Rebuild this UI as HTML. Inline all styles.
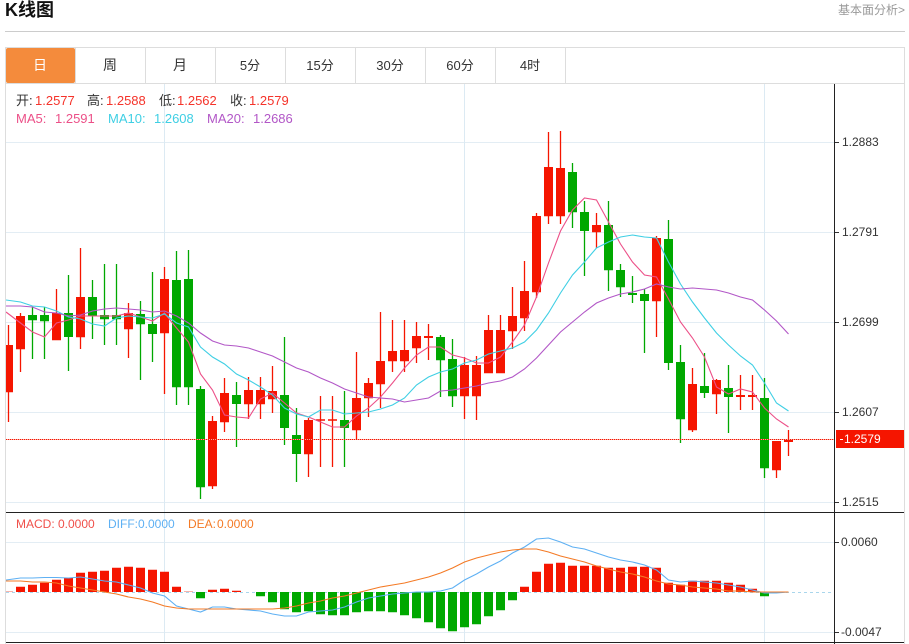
<!DOCTYPE html>
<html>
<head>
<meta charset="utf-8">
<style>
html,body{margin:0;padding:0;background:#fff;width:909px;height:644px;overflow:hidden}
svg{position:absolute;left:0;top:0;display:block}
text{font-family:"Liberation Sans","Noto Sans CJK SC",sans-serif}
</style>
</head>
<body>
<svg width="909" height="644" viewBox="0 0 909 644" xmlns="http://www.w3.org/2000/svg">
<defs><clipPath id="c"><rect x="6" y="84" width="828" height="558"/></clipPath></defs>
<!-- header -->
<text x="5" y="16" font-size="18" font-weight="700" fill="#111">K线图</text>
<text x="905" y="14" font-size="12" fill="#999" text-anchor="end">基本面分析&gt;</text>
<rect x="5" y="31" width="900" height="1" fill="#ccc"/>
<!-- frame -->
<rect x="5.5" y="47.5" width="899" height="597" fill="none" stroke="#ddd"/>
<rect x="6" y="83" width="898" height="1" fill="#ddd"/>
<path d="M75.5 48V83M145.5 48V83M215.5 48V83M285.5 48V83M355.5 48V83M425.5 48V83M495.5 48V83M565.5 48V83" stroke="#ddd" fill="none"/>
<rect x="6" y="48" width="69" height="35" rx="2" fill="#f48b3c"/>
<g font-size="13" text-anchor="middle" fill="#333">
<text x="40" y="70" fill="#fff" font-size="14">日</text>
<text x="110" y="70" font-size="14">周</text>
<text x="180" y="70" font-size="14">月</text>
<text x="250" y="70">5分</text>
<text x="320" y="70">15分</text>
<text x="390" y="70">30分</text>
<text x="460" y="70">60分</text>
<text x="530" y="70">4时</text>
</g>
<!-- grid -->
<path d="M6 142.5H834M6 232.5H834M6 322.5H834M6 412.5H834M6 502.5H834M6 542.5H834M6 632.5H834" stroke="#e3edf4" fill="none"/>
<path d="M164.5 84V642M464.5 84V642M764.5 84V642" stroke="#dceaf3" fill="none"/>
<g clip-path="url(#c)">
<!-- red wicks -->
<path fill="none" stroke="#f51500" stroke-width="1.3" d="M8.5 325V422M20.5 313V372M56.5 289V340M80.5 248V349M128.5 303V358M164.5 267V394M212.5 416V489M224.5 378V432M248.5 377V419M260.5 377V419M272.5 366V413M308.5 418V477M320.5 396V467M332.5 396V467M356.5 352V439M368.5 378V417M380.5 312V408M392.5 320V372M404.5 320V372M416.5 322V363M428.5 324V360M464.5 357V419M476.5 356V420M488.5 315V373M500.5 315V373M512.5 287V349M524.5 261V331M536.5 213V298M548.5 132V224M560.5 131V224M596.5 213V248M656.5 236V337M692.5 368V432M716.5 379V414M740.5 375V410M752.5 375V410M776.5 441V478M788.5 430V456"/>
<!-- green wicks -->
<path fill="none" stroke="#00a800" stroke-width="1.3" d="M32.5 307V359M44.5 307V359M68.5 275V371M92.5 280V339M104.5 264V345M116.5 264V345M140.5 301V380M152.5 272V362M176.5 251V405M188.5 250V405M200.5 386V499M236.5 382V447M284.5 337V445M296.5 408V482M344.5 391V467M440.5 335V397M452.5 339V407M572.5 163V228M584.5 201V276M608.5 201V291M620.5 264V297M632.5 276V303M644.5 289V353M668.5 220V370M680.5 345V443M704.5 353V398M728.5 365V433M764.5 378V478"/>
<!-- red bodies -->
<path fill="none" stroke="#f51500" stroke-width="9" d="M8.5 345V392.3M20.5 316V349.3M56.5 313V340.3M80.5 297V337.3M128.5 313V329.3M164.5 279V333.3M212.5 421V486.3M224.5 393V422.3M248.5 390V404.3M260.5 390V404.3M272.5 391V399.3M308.5 420V454.3M320.5 419.3V420.7M332.5 419.3V420.7M356.5 398V430.3M368.5 383V398.3M380.5 361V384.3M392.5 351V361.3M404.5 350V361.3M416.5 336V348.3M428.5 336V338M464.5 365V396.3M476.5 365V396.3M488.5 330V373.3M500.5 330V373.3M512.5 316V331.3M524.5 291V318.3M536.5 216V292.3M548.5 167V216.3M560.5 168V216.3M596.5 225V232.3M656.5 238V301.3M692.5 384V430.3M716.5 380V394.3M740.5 395V397M752.5 395V397M776.5 441V470.3M788.5 439V442"/>
<!-- green bodies -->
<path fill="none" stroke="#00a800" stroke-width="9" d="M32.5 315V320.3M44.5 315V321.3M68.5 313V337M92.5 297V316.3M104.5 315V319.3M116.5 315V319.3M140.5 314V324.3M152.5 324V334M176.5 280V387.3M188.5 279V387.3M200.5 389V487.3M236.5 395V404M284.5 395V428M296.5 435V454M344.5 420V428M440.5 337V360.3M452.5 359V396.3M572.5 172V212.3M584.5 212V231M608.5 225V270.3M620.5 270V287.3M632.5 293V295M644.5 294V301M668.5 239V363M680.5 362V419.3M704.5 386V393M728.5 388V397M764.5 398V468.3"/>
<!-- MA5 -->
<polyline fill="none" stroke="#ec5088" stroke-width="1.1" points="6,312 20.5,323 32.5,332 44.5,337 56.5,323 68.5,320 80.5,316 92.5,316 104.5,316 116.5,316 128.5,313 140.5,317 152.5,321 164.5,313 176.5,328 188.5,342 200.5,374 212.5,390 224.5,415 236.5,417 248.5,418 260.5,399 272.5,393 284.5,403 296.5,413 308.5,417 320.5,422 332.5,427 344.5,427 356.5,416 368.5,408 380.5,397 392.5,383 404.5,368 416.5,355 428.5,347 440.5,347 452.5,355 464.5,358 476.5,363 488.5,363 500.5,357 512.5,342 524.5,325 536.5,297 548.5,263 560.5,231 572.5,210 584.5,198 596.5,200 608.5,222 620.5,244 632.5,262 644.5,275 656.5,277 668.5,299 680.5,322 692.5,338 704.5,357 716.5,387 728.5,394 740.5,389 752.5,392 764.5,408 776.5,419 788.5,427"/>
<!-- MA10 -->
<polyline fill="none" stroke="#3fcfe4" stroke-width="1.1" points="6,300 20.5,302 32.5,306 44.5,307 56.5,311 68.5,317 80.5,319 92.5,324 104.5,326 116.5,318 128.5,316 140.5,317 152.5,318 164.5,314 176.5,323 188.5,327 200.5,347 212.5,357 224.5,364 236.5,374 248.5,380 260.5,387 272.5,395 284.5,408 296.5,414 308.5,417 320.5,410 332.5,410 344.5,414 356.5,413 368.5,412 380.5,409 392.5,405 404.5,398 416.5,385 428.5,377 440.5,372 452.5,369 464.5,363 476.5,360 488.5,354 500.5,351 512.5,348 524.5,342 536.5,330 548.5,313 560.5,293 572.5,275 584.5,262 596.5,248 608.5,242 620.5,237 632.5,235 644.5,237 656.5,238 668.5,262 680.5,284 692.5,302 704.5,318 716.5,333 728.5,345 740.5,356 752.5,365 764.5,383 776.5,403 788.5,411"/>
<!-- MA20 -->
<polyline fill="none" stroke="#b257c7" stroke-width="1.1" points="6,306 20.5,306 32.5,307 44.5,312 56.5,313 68.5,316 80.5,315 92.5,311 104.5,309 116.5,308 128.5,309 140.5,310 152.5,312 164.5,311 176.5,316 188.5,323 200.5,333 212.5,341 224.5,345 236.5,346 248.5,348 260.5,352 272.5,356 284.5,362 296.5,368 308.5,372 320.5,378 332.5,383 344.5,389 356.5,393 368.5,397 380.5,398 392.5,399 404.5,402 416.5,400 428.5,398 440.5,391 452.5,390 464.5,388 476.5,386 488.5,383 500.5,381 512.5,377 524.5,369 536.5,358 548.5,345 560.5,332 572.5,322 584.5,312 596.5,303 608.5,298 620.5,294 632.5,292 644.5,289 656.5,284 668.5,287 680.5,289 692.5,288 704.5,289 716.5,290 728.5,293 740.5,297 752.5,300 764.5,310 776.5,321 788.5,334"/>
<!-- last price dotted -->
<rect x="6" y="439" width="828" height="1" fill="#f9a8a0"/>
<path d="M6 439.5H834" stroke="#f51500" stroke-dasharray="1 1" fill="none"/>
<!-- MACD zero -->
<path d="M6 592.5H834" stroke="#a9d6ec" stroke-dasharray="3 3" fill="none"/>
<!-- MACD red bars -->
<path fill="none" stroke="#f51500" stroke-width="9" d="M20.5 586.7V592M32.5 584.7V592M44.5 582.7V592M56.5 579.7V592M68.5 577.7V592M80.5 572.7V592M92.5 571.7V592M104.5 570.7V592M116.5 567.7V592M128.5 566.7V592M140.5 567.7V592M152.5 569.7V592M164.5 571.7V592M176.5 586.7V592M212.5 589.7V592M224.5 588.7V592M236.5 590.7V592M524.5 586.7V592M536.5 571.7V592M548.5 563.7V592M560.5 562.7V592M572.5 565.7V592M584.5 565.7V592M596.5 565.7V592M608.5 567.7V592M620.5 567.7V592M632.5 566.7V592M644.5 566.7V592M656.5 567.7V592M668.5 582.7V592M680.5 584.7V592M692.5 580.7V592M704.5 580.7V592M716.5 580.7V592M728.5 582.7V592M740.5 584.7V592M752.5 588.7V592"/>
<path fill="none" stroke="#f7b3ab" stroke-width="9" d="M8.5 591V592M188.5 591V592"/>
<!-- MACD green bars -->
<path fill="none" stroke="#00a800" stroke-width="9" d="M200.5 592V598.3M260.5 592V596.3M272.5 592V602.3M284.5 592V609.3M296.5 592V612.3M308.5 592V611.3M320.5 592V614.3M332.5 592V615.3M344.5 592V615.3M356.5 592V612.3M368.5 592V611.3M380.5 592V611.3M392.5 592V612.3M404.5 592V615.3M416.5 592V618.3M428.5 592V622.3M440.5 592V628.3M452.5 592V631.3M464.5 592V627.3M476.5 592V624.3M488.5 592V616.3M500.5 592V610.3M512.5 592V600.3M764.5 592V596.3"/>
<!-- DIFF -->
<polyline fill="none" stroke="#5eb0f3" stroke-width="1.1" points="6,580 20.5,578 32.5,578 44.5,577.5 56.5,577.5 68.5,578 80.5,577 92.5,579 104.5,581 116.5,582 128.5,585 140.5,588 152.5,593 164.5,596 176.5,606 188.5,609 200.5,612 212.5,607 224.5,607 236.5,609 248.5,610 260.5,611 272.5,614 284.5,616 296.5,616 308.5,612 320.5,611 332.5,610 344.5,607 356.5,602 368.5,598 380.5,596 392.5,594 404.5,593 416.5,592 428.5,592 440.5,591 452.5,588 464.5,580 476.5,574 488.5,567 500.5,561 512.5,553 524.5,547 536.5,539 548.5,538 560.5,542 572.5,547 584.5,549 596.5,553 608.5,557 620.5,560 632.5,562 644.5,565 656.5,570 668.5,580 680.5,582 692.5,581 704.5,582 716.5,583 728.5,585 740.5,587 752.5,590 764.5,593 776.5,593 788.5,592"/>
<!-- DEA -->
<polyline fill="none" stroke="#f47a25" stroke-width="1.1" points="6,581 20.5,581 32.5,582 44.5,582 56.5,583 68.5,586 80.5,588 92.5,590 104.5,592 116.5,594 128.5,597 140.5,599 152.5,602 164.5,606 176.5,608 188.5,609 200.5,609 212.5,609 224.5,609 236.5,609 248.5,609 260.5,609 272.5,609 284.5,608 296.5,606 308.5,603 320.5,601 332.5,598 344.5,596 356.5,593 368.5,590 380.5,587 392.5,585 404.5,583 416.5,580 428.5,577 440.5,573 452.5,568 464.5,562 476.5,558 488.5,555 500.5,552 512.5,550 524.5,549 536.5,549 548.5,552 560.5,556 572.5,559 584.5,562 596.5,566 608.5,569 620.5,572 632.5,574 644.5,577 656.5,581 668.5,584 680.5,585 692.5,587 704.5,588 716.5,589 728.5,591 740.5,591 752.5,592 764.5,592 776.5,592 788.5,592"/>
</g>
<!-- axes -->
<path d="M834.5 84V644M6 512.5H904M6 642.5H904" stroke="#222" fill="none"/>
<path d="M835 142.5H839M835 232.5H839M835 322.5H839M835 412.5H839M835 502.5H839M835 542.5H839M835 632.5H839" stroke="#333" fill="none"/>
<rect x="836" y="430" width="68" height="18" fill="#f51500"/>
<rect x="840" y="439" width="3" height="1" fill="#fff"/>
<g font-size="12" fill="#333">
<text x="842" y="146">1.2883</text>
<text x="842" y="236">1.2791</text>
<text x="842" y="326">1.2699</text>
<text x="842" y="416">1.2607</text>
<text x="844" y="443" fill="#fff">1.2579</text>
<text x="842" y="506">1.2515</text>
<text x="841" y="546">0.0060</text>
<text x="841" y="636">-0.0047</text>
</g>
<!-- legend -->
<g font-size="13">
<text x="16" y="105" fill="#333">开:</text><text x="35" y="105" fill="#f5332a">1.2577</text>
<text x="87" y="105" fill="#333">高:</text><text x="106" y="105" fill="#f5332a">1.2588</text>
<text x="159" y="105" fill="#333">低:</text><text x="177" y="105" fill="#f5332a">1.2562</text>
<text x="230" y="105" fill="#333">收:</text><text x="249" y="105" fill="#f5332a">1.2579</text>
<text x="16" y="123" fill="#ec5088">MA5:</text><text x="55" y="123" fill="#ec5088">1.2591</text>
<text x="108" y="123" fill="#3fcfe4">MA10:</text><text x="154" y="123" fill="#3fcfe4">1.2608</text>
<text x="207" y="123" fill="#b257c7">MA20:</text><text x="253" y="123" fill="#b257c7">1.2686</text>
</g>
<g font-size="12">
<text x="16" y="528" fill="#f0504a">MACD:</text><text x="58" y="528" fill="#f0504a">0.0000</text>
<text x="108" y="528" fill="#5eb0f3">DIFF:</text><text x="138" y="528" fill="#5eb0f3">0.0000</text>
<text x="188" y="528" fill="#f47a25">DEA:</text><text x="217" y="528" fill="#f47a25">0.0000</text>
</g>
</svg>
</body>
</html>
